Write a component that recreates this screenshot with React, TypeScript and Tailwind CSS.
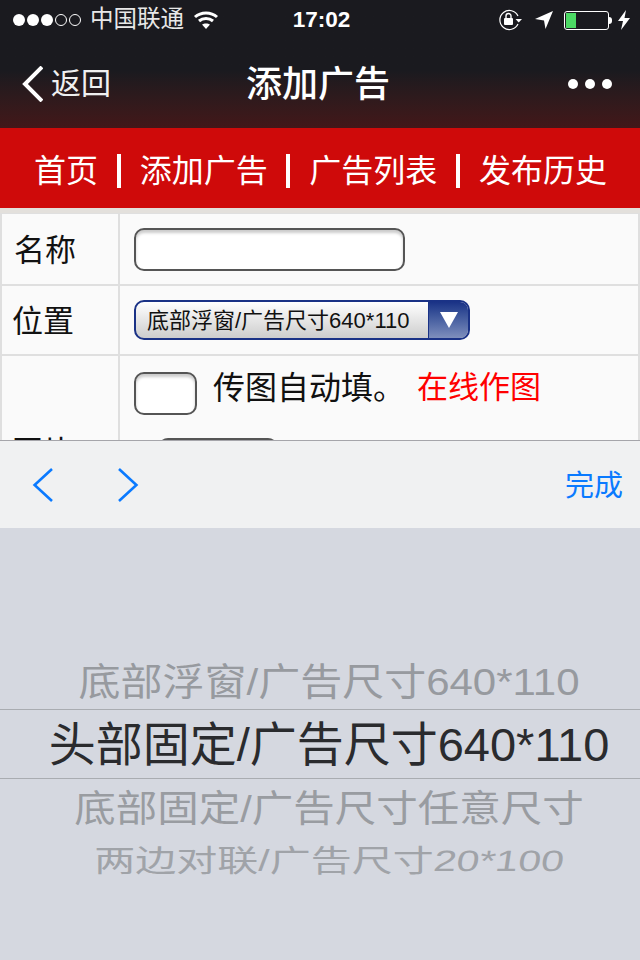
import React from 'react';

const font = 'font-["Liberation_Sans","Noto_Sans_CJK_SC",sans-serif]';

const Chevron = ({ dir, w, h, sw }: { dir: 'left' | 'right'; w: number; h: number; sw: number }) => (
  <svg width={w} height={h} viewBox={`0 0 ${w} ${h}`} fill="none" stroke="currentColor" strokeWidth={sw}>
    {dir === 'left' ? (
      <path d={`M${w - 1} 1 L${sw} ${h / 2} L${w - 1} ${h - 1}`} />
    ) : (
      <path d={`M1 1 L${w - sw} ${h / 2} L1 ${h - 1}`} />
    )}
  </svg>
);

const StatusBar = () => (
  <div className="flex h-10 items-center justify-between pl-[13px] pr-[10px] text-white">
    <div className="flex w-[250px] items-center">
      <div className="flex gap-[2px]">
        {[0, 1, 2].map((i) => (
          <span key={i} className="h-[12px] w-[12px] rounded-full bg-white" />
        ))}
        {[3, 4].map((i) => (
          <span key={i} className="h-[12px] w-[12px] rounded-full border border-white" />
        ))}
      </div>
      <span className="ml-[9px] text-[23.5px] leading-none text-[#e8e8e8]">中国联通</span>
      <svg className="ml-[9px]" width="26" height="20" viewBox="0 0 26 20" fill="none" stroke="#fff" strokeWidth="3">
        <path d="M2 7 C8 1.5 18 1.5 24 7" />
        <path d="M6 11 C10 7.5 16 7.5 20 11" />
        <path d="M13 19 L9 14.5 C11 13 15 13 17 14.5 Z" fill="#fff" stroke="none" />
      </svg>
    </div>
    <span className="text-[22.5px] font-bold leading-none">17:02</span>
    <div className="flex w-[250px] items-center justify-end">
      <svg width="24" height="22" viewBox="0 0 24 22" fill="none">
        <path d="M20 15 A9.5 9.5 0 1 1 20 7" stroke="#fff" strokeWidth="1.2" />
        <path d="M17.5 10 L24 10 L20.7 13.5 Z" fill="#fff" />
        <rect x="6" y="9" width="9" height="7" rx="1" fill="#fff" />
        <path d="M8 9 V7 A2.5 2.5 0 0 1 13 7 V9" stroke="#fff" strokeWidth="1.4" />
      </svg>
      <svg className="ml-[12px]" width="20" height="20" viewBox="0 0 20 20">
        <path d="M19 1 L1 9 L10 10.5 L11.5 19 Z" fill="#fff" />
      </svg>
      <div className="ml-[10px] flex items-center">
        <div className="h-[19px] w-[45px] rounded-[3px] border border-white p-[1px]">
          <div className="h-full w-[10px] bg-[#4cd964]" />
        </div>
        <div className="h-[7px] w-[3px] rounded-r-full bg-white" />
      </div>
      <svg className="ml-[6px]" width="12" height="20" viewBox="0 0 12 20">
        <path d="M8 0 L0 11 L5 11 L3 20 L12 8 L6.5 8 Z" fill="#fff" />
      </svg>
    </div>
  </div>
);

const NavBar = () => (
  <div className="relative flex h-[88px] items-center justify-between pl-[21px] pr-[28px] text-white">
    <div className="flex items-center">
      <Chevron dir="left" w={22} h={36} sw={4} />
      <span className="ml-[8px] text-[30px] leading-none text-[#f0f0f0]">返回</span>
    </div>
    <span className="absolute left-[246px] top-[24px] text-[36px] leading-[42px] font-medium">添加广告</span>
    <div className="flex gap-[7px]">
      {[0, 1, 2].map((i) => (
        <span key={i} className="h-[10px] w-[10px] rounded-full bg-white" />
      ))}
    </div>
  </div>
);

const tabs = ['首页', '添加广告', '广告列表', '发布历史'];

const TabBar = () => (
  <div className="flex h-20 items-center justify-between bg-[#cf0a0a] pl-[34px] pr-[33px] pt-[5px] text-[32px] leading-none text-white">
    {tabs.map((t, i) => (
      <React.Fragment key={t}>
        {i > 0 && <span className="h-[34px] w-[4px] bg-white" />}
        <span>{t}</span>
      </React.Fragment>
    ))}
  </div>
);

const Form = () => (
  <div className="h-[232px] overflow-hidden bg-[#e3e0dc] pt-[5px] text-[31px] leading-none text-[#111]">
    <div className="grid grid-cols-[116px_1fr] gap-[2px] bg-[#dfdfdf] px-[2px] pt-[1px]">
      <div className="flex h-[70px] items-center bg-[#fafafa] pl-[12px] pt-[3px]">名称</div>
      <div className="flex h-[70px] items-center bg-[#fafafa] pl-[14px]">
        <div className="h-[43px] w-[271px] rounded-[10px] border-2 border-[#555] bg-white shadow-[inset_0_3px_3px_#ccc]" />
      </div>
      <div className="flex h-[68px] items-center bg-[#fafafa] pl-[10px] pt-[3px]">位置</div>
      <div className="flex h-[68px] items-center bg-[#fafafa] pl-[14px]">
        <div className="flex h-[40px] w-[336px] overflow-hidden rounded-[10px] border-2 border-[#1a3286] bg-gradient-to-b from-white to-[#cdcdcd]">
          <span className="flex-1 pl-[11px] text-[22px] leading-[37px]">底部浮窗/广告尺寸640*110</span>
          <div className="flex w-[40px] items-center justify-center border-l border-[#1a3286] bg-gradient-to-b from-[#1a3286] to-[#7f8fbc]">
            <svg width="18" height="16" viewBox="0 0 18 16"><path d="M0 0 H18 L9 16 Z" fill="#fff" /></svg>
          </div>
        </div>
      </div>
      <div className="h-[100px] bg-[#fafafa] pl-[10px] pt-[81px]">图片</div>
      <div className="h-[100px] bg-[#fafafa] pl-[14px] pt-[16px]">
        <div className="flex items-start">
          <div className="h-[43px] w-[63px] rounded-[10px] border-2 border-[#555] bg-white shadow-[inset_0_3px_3px_#ccc]" />
          <span className="ml-[16px] text-[32px]">传图自动填。</span>
          <span className="ml-[12px] text-[#f00]">在线作图</span>
        </div>
        <div className="ml-[24px] mt-[23px] h-[43px] w-[120px] rounded-[10px] border-2 border-[#555] bg-white" />
      </div>
    </div>
  </div>
);

const Accessory = () => (
  <div className="flex h-[88px] items-center border-t border-[#a5a5aa] bg-[#f0f1f2] pl-[32px] pr-[17px] text-[#0a7aff]">
    <Chevron dir="left" w={21} h={34} sw={2.6} />
    <span className="ml-[65px]">
      <Chevron dir="right" w={21} h={34} sw={2.6} />
    </span>
    <span className="ml-auto pt-[3px] text-[29px] leading-none">完成</span>
  </div>
);

const Picker = () => (
  <div className="flex h-[432px] flex-col bg-[#d5d8e0] pt-[132px]">
    <div className="h-[49px] scale-y-90 pl-[18px] text-center text-[42px] leading-[44px] text-[#979a9f]">
      底部浮窗/广告尺寸640*110
    </div>
    <div className="flex h-[70px] w-full items-center justify-center border-y border-[#a9acb1] pl-[18px] text-[47px] leading-none text-[#2a2b2e]">
      头部固定/广告尺寸640*110
    </div>
    <div className="mt-[8px] h-[48px] scale-y-90 pl-[18px] text-center text-[41.5px] leading-[44px] text-[#999ca1]">
      底部固定/广告尺寸任意尺寸
    </div>
    <div className="mt-[4px] scale-y-[0.72] pl-[18px] text-center text-[41px] leading-[44px] text-[#a0a3a8]">
      两边对联/广告尺寸<span className="inline-block -skew-x-6">20*100</span>
    </div>
  </div>
);

export default function App() {
  return (
    <div className={`${font} h-[960px] w-[640px] overflow-hidden`}>
      <div className="bg-gradient-to-b from-[#1a1a1f] from-[55%] to-[#431719]">
        <StatusBar />
        <NavBar />
      </div>
      <TabBar />
      <Form />
      <Accessory />
      <Picker />
    </div>
  );
}
